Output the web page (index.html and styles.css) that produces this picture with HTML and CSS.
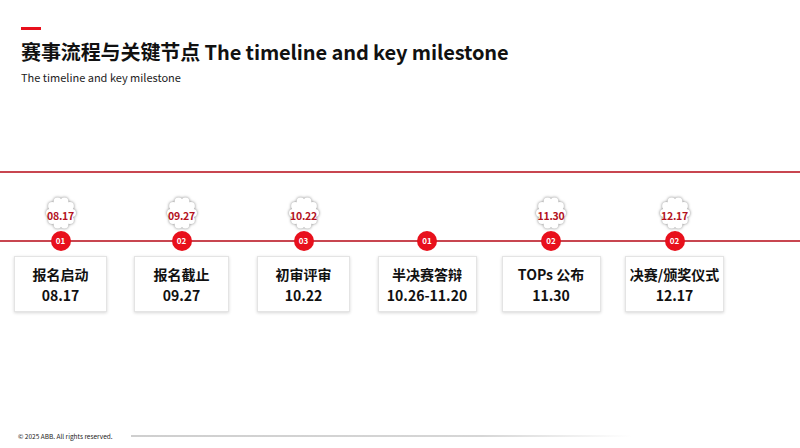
FILE: index.html
```html
<!DOCTYPE html>
<html lang="zh-CN">
<head>
<meta charset="utf-8">
<title>赛事流程与关键节点</title>
<link rel="stylesheet" href="styles.css">
</head>
<body>
<div class="page">
  <header class="head">
    <div class="dash"></div>
    <h1 class="title">赛事流程与关键节点 The timeline and key milestone</h1>
    <p class="subtitle">The timeline and key milestone</p>
  </header>

  <section class="timeline">
    <div class="steps">
      <div class="step">
        <div class="badge">
          <svg class="badge-shape" viewBox="0 0 30 32" width="30" height="32"><g fill="#fff"><ellipse cx="15" cy="16" rx="12" ry="13"/><circle cx="26" cy="16" r="4"/><circle cx="23.9" cy="23.06" r="4"/><circle cx="18.4" cy="27.41" r="4"/><circle cx="11.6" cy="27.41" r="4"/><circle cx="6.1" cy="23.06" r="4"/><circle cx="4" cy="16" r="4"/><circle cx="6.1" cy="8.94" r="4"/><circle cx="11.6" cy="4.59" r="4"/><circle cx="18.4" cy="4.59" r="4"/><circle cx="23.9" cy="8.94" r="4"/></g></svg>
          <span class="badge-text">08.17</span>
        </div>
        <div class="dot">01</div>
        <div class="card card-narrow"><div>报名启动</div><div>08.17</div></div>
      </div>

      <div class="step">
        <div class="badge">
          <svg class="badge-shape" viewBox="0 0 30 32" width="30" height="32"><g fill="#fff"><ellipse cx="15" cy="16" rx="12" ry="13"/><circle cx="26" cy="16" r="4"/><circle cx="23.9" cy="23.06" r="4"/><circle cx="18.4" cy="27.41" r="4"/><circle cx="11.6" cy="27.41" r="4"/><circle cx="6.1" cy="23.06" r="4"/><circle cx="4" cy="16" r="4"/><circle cx="6.1" cy="8.94" r="4"/><circle cx="11.6" cy="4.59" r="4"/><circle cx="18.4" cy="4.59" r="4"/><circle cx="23.9" cy="8.94" r="4"/></g></svg>
          <span class="badge-text">09.27</span>
        </div>
        <div class="dot">02</div>
        <div class="card"><div>报名截止</div><div>09.27</div></div>
      </div>

      <div class="step">
        <div class="badge">
          <svg class="badge-shape" viewBox="0 0 30 32" width="30" height="32"><g fill="#fff"><ellipse cx="15" cy="16" rx="12" ry="13"/><circle cx="26" cy="16" r="4"/><circle cx="23.9" cy="23.06" r="4"/><circle cx="18.4" cy="27.41" r="4"/><circle cx="11.6" cy="27.41" r="4"/><circle cx="6.1" cy="23.06" r="4"/><circle cx="4" cy="16" r="4"/><circle cx="6.1" cy="8.94" r="4"/><circle cx="11.6" cy="4.59" r="4"/><circle cx="18.4" cy="4.59" r="4"/><circle cx="23.9" cy="8.94" r="4"/></g></svg>
          <span class="badge-text">10.22</span>
        </div>
        <div class="dot">03</div>
        <div class="card card-narrow"><div>初审评审</div><div>10.22</div></div>
      </div>

      <div class="step">
        <div class="badge badge-empty"></div>
        <div class="dot">01</div>
        <div class="card card-wide"><div>半决赛答辩</div><div>10.26-11.20</div></div>
      </div>

      <div class="step">
        <div class="badge">
          <svg class="badge-shape" viewBox="0 0 30 32" width="30" height="32"><g fill="#fff"><ellipse cx="15" cy="16" rx="12" ry="13"/><circle cx="26" cy="16" r="4"/><circle cx="23.9" cy="23.06" r="4"/><circle cx="18.4" cy="27.41" r="4"/><circle cx="11.6" cy="27.41" r="4"/><circle cx="6.1" cy="23.06" r="4"/><circle cx="4" cy="16" r="4"/><circle cx="6.1" cy="8.94" r="4"/><circle cx="11.6" cy="4.59" r="4"/><circle cx="18.4" cy="4.59" r="4"/><circle cx="23.9" cy="8.94" r="4"/></g></svg>
          <span class="badge-text">11.30</span>
        </div>
        <div class="dot">02</div>
        <div class="card card-wide"><div>TOPs 公布</div><div>11.30</div></div>
      </div>

      <div class="step">
        <div class="badge">
          <svg class="badge-shape" viewBox="0 0 30 32" width="30" height="32"><g fill="#fff"><ellipse cx="15" cy="16" rx="12" ry="13"/><circle cx="26" cy="16" r="4"/><circle cx="23.9" cy="23.06" r="4"/><circle cx="18.4" cy="27.41" r="4"/><circle cx="11.6" cy="27.41" r="4"/><circle cx="6.1" cy="23.06" r="4"/><circle cx="4" cy="16" r="4"/><circle cx="6.1" cy="8.94" r="4"/><circle cx="11.6" cy="4.59" r="4"/><circle cx="18.4" cy="4.59" r="4"/><circle cx="23.9" cy="8.94" r="4"/></g></svg>
          <span class="badge-text">12.17</span>
        </div>
        <div class="dot">02</div>
        <div class="card card-wide"><div>决赛/颁奖仪式</div><div>12.17</div></div>
      </div>
    </div>
  </section>

  <footer class="foot">
    <span class="copy">© 2025 ABB. All rights reserved.</span>
    <span class="foot-line"></span>
  </footer>
</div>
</body>
</html>
```

FILE: styles.css
```css
* { box-sizing: border-box; }

html, body {
  margin: 0;
  padding: 0;
  background: #ffffff;
}

body {
  font-family: "Noto Sans CJK SC", "Noto Sans", sans-serif;
  color: #111;
}

.page {
  width: 800px;
  height: 448px;
  display: flex;
  flex-direction: column;
  overflow: hidden;
}

.head {
  padding: 27px 0 0 21px;
}

.dash {
  width: 20px;
  height: 3px;
  background: #e8101c;
}

.title {
  margin: 8px 0 0;
  font-size: 20px;
  line-height: 28px;
  font-weight: 700;
  color: #111;
  letter-spacing: -0.1px;
}

.subtitle {
  margin: 4px 0 0;
  font-size: 11px;
  line-height: 14px;
  font-weight: 400;
  color: #222;
}

.timeline {
  margin-top: 87px;
  border-top: 2px solid #c84650;
  background-image: linear-gradient(#c84650, #c84650);
  background-repeat: no-repeat;
  background-size: 100% 2px;
  background-position: 0 67px;
}

.steps {
  display: grid;
  grid-template-columns: 121px 121px 123px 124px 124px 123px;
  padding-top: 24px;
}

.step {
  display: flex;
  flex-direction: column;
  align-items: center;
}

.badge {
  width: 30px;
  height: 32px;
  display: grid;
  grid-template-columns: 30px;
  grid-template-rows: 32px;
  align-items: center;
  justify-items: center;
}

.badge > * {
  grid-area: 1 / 1;
}

.badge-shape {
  display: block;
  width: 30px;
  height: 32px;
  filter: drop-shadow(0 0 1.5px rgba(0, 0, 0, 0.5));
}

.badge-text {
  position: relative;
  z-index: 1;
  font-size: 10.5px;
  line-height: 14px;
  font-weight: 700;
  color: #b3121e;
  white-space: nowrap;
  margin-top: 5px;
  letter-spacing: -0.2px;
}

.badge-empty {
  visibility: hidden;
}

.dot {
  margin-top: 2px;
  width: 20px;
  height: 20px;
  border-radius: 50%;
  background: #e8101c;
  color: #fff;
  font-size: 8px;
  font-weight: 700;
  line-height: 20px;
  text-align: center;
}

.card {
  margin-top: 5px;
  width: 95px;
  height: 56px;
  padding-top: 7px;
  background: #fff;
  border: 1px solid #e4e4e4;
  box-shadow: 0 1px 3px rgba(0, 0, 0, 0.16);
  text-align: center;
  font-size: 14px;
  line-height: 21px;
  font-weight: 700;
  color: #111;
  white-space: nowrap;
}

.card-narrow { width: 93px; }
.card-wide { width: 99px; }

.foot {
  margin-top: auto;
  height: 24px;
  display: flex;
  align-items: center;
  padding-left: 18px;
  gap: 18px;
}

.copy {
  font-size: 6.5px;
  line-height: 8px;
  color: #222;
  font-family: "Noto Sans CJK SC", sans-serif;
}

.foot-line {
  width: 500px;
  height: 2px;
  background: linear-gradient(to right, #cfcfcf 0%, #d6d6d6 70%, rgba(230, 230, 230, 0) 100%);
}
```
